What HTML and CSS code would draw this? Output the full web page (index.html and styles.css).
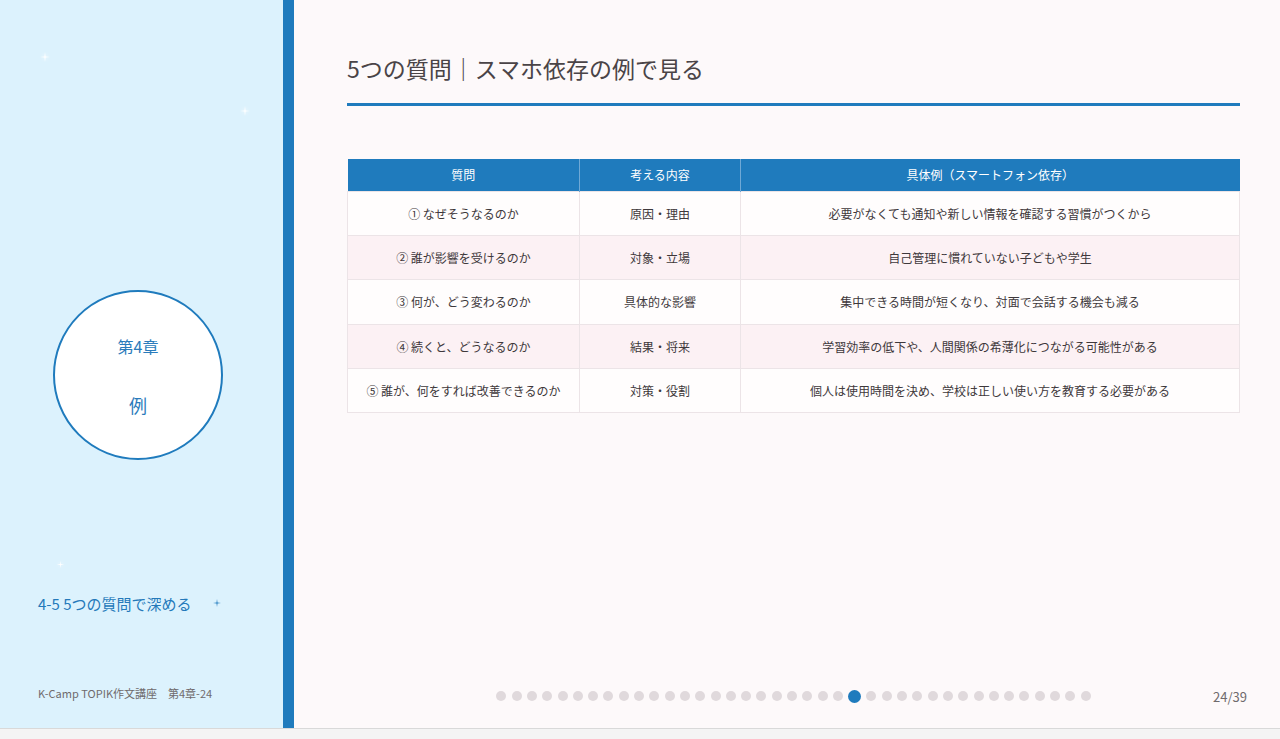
FILE: index.html
```html
<!DOCTYPE html>
<html lang="ja">
<head>
<meta charset="utf-8">
<title>5つの質問｜スマホ依存の例で見る</title>
<link rel="stylesheet" href="styles.css">
</head>
<body>
<div class="slide">
  <aside class="sidebar">
    <svg class="sparkle s1" viewBox="0 0 20 20"><path d="M10 2 L11 9 L18 10 L11 11 L10 18 L9 11 L2 10 L9 9 Z"/></svg>
    <svg class="sparkle s2" viewBox="0 0 20 20"><path d="M10 2 L11 9 L18 10 L11 11 L10 18 L9 11 L2 10 L9 9 Z"/></svg>
    <svg class="sparkle s3" viewBox="0 0 20 20"><path d="M10 2 L11 9 L18 10 L11 11 L10 18 L9 11 L2 10 L9 9 Z"/></svg>
    <svg class="sparkle s4" viewBox="0 0 20 20"><path d="M10 2 L11 9 L18 10 L11 11 L10 18 L9 11 L2 10 L9 9 Z"/></svg>
    <div class="chapter">
      <div class="chapter-num">第4章</div>
      <div class="chapter-name">例</div>
    </div>
    <div class="section">4-5 5つの質問で深める</div>
    <div class="credit">K-Camp TOPIK作文講座　第4章-24</div>
  </aside>
  <div class="divider"></div>
  <main class="main">
    <h1 class="title">5つの質問｜スマホ依存の例で見る</h1>
    <table class="qtable">
      <colgroup><col class="c1"><col class="c2"><col class="c3"></colgroup>
      <thead>
        <tr><th>質問</th><th>考える内容</th><th>具体例（スマートフォン依存）</th></tr>
      </thead>
      <tbody>
        <tr><td>① なぜそうなるのか</td><td>原因・理由</td><td>必要がなくても通知や新しい情報を確認する習慣がつくから</td></tr>
        <tr><td>② 誰が影響を受けるのか</td><td>対象・立場</td><td>自己管理に慣れていない子どもや学生</td></tr>
        <tr><td>③ 何が、どう変わるのか</td><td>具体的な影響</td><td>集中できる時間が短くなり、対面で会話する機会も減る</td></tr>
        <tr><td>④ 続くと、どうなるのか</td><td>結果・将来</td><td>学習効率の低下や、人間関係の希薄化につながる可能性がある</td></tr>
        <tr><td>⑤ 誰が、何をすれば改善できるのか</td><td>対策・役割</td><td>個人は使用時間を決め、学校は正しい使い方を教育する必要がある</td></tr>
      </tbody>
    </table>
    <footer class="footer">
      <div></div>
      <div class="dots">
        <span class="dot"></span><span class="dot"></span><span class="dot"></span><span class="dot"></span><span class="dot"></span><span class="dot"></span><span class="dot"></span><span class="dot"></span><span class="dot"></span><span class="dot"></span><span class="dot"></span><span class="dot"></span><span class="dot"></span><span class="dot"></span><span class="dot"></span><span class="dot"></span><span class="dot"></span><span class="dot"></span><span class="dot"></span><span class="dot"></span><span class="dot"></span><span class="dot"></span><span class="dot"></span><span class="dot active"></span><span class="dot"></span><span class="dot"></span><span class="dot"></span><span class="dot"></span><span class="dot"></span><span class="dot"></span><span class="dot"></span><span class="dot"></span><span class="dot"></span><span class="dot"></span><span class="dot"></span><span class="dot"></span><span class="dot"></span><span class="dot"></span><span class="dot"></span>
      </div>
      <div class="pagenum">24/39</div>
    </footer>
  </main>
</div>
</body>
</html>
```

FILE: styles.css
```css
* { box-sizing: border-box; }
html, body { margin: 0; padding: 0; }
body {
  background: #f4f4f4;
  font-family: "Noto Sans CJK JP", "Noto Sans", sans-serif;
  color: #4a4447;
  height: 739px;
  overflow: hidden;
}
.slide {
  display: flex;
  height: 729px;
  border-bottom: 1px solid #d9d9d9;
}
.sidebar {
  position: relative;
  width: 283px;
  flex: none;
  background: #dcf2fd;
  display: flex;
  flex-direction: column;
  padding: 290px 0 0 38px;
}
.divider {
  width: 11px;
  flex: none;
  background: #1f7bbd;
}
.sparkle {
  position: absolute;
  width: 12px;
  height: 12px;
  fill: #ffffff;
  filter: drop-shadow(0 0 2px rgba(255,255,255,0.9));
}
.s1 { left: 39px; top: 51px; }
.s2 { left: 239px; top: 105px; }
.s3 { left: 56px; top: 560px; width: 9px; height: 9px; }
.s4 { left: 212px; top: 598px; width: 10px; height: 10px; fill: #2a80c0; filter: none; }
.chapter {
  width: 170px;
  height: 170px;
  margin-left: 15px;
  border-radius: 50%;
  border: 2px solid #1f7bbd;
  background: #ffffff;
  display: flex;
  flex-direction: column;
  align-items: center;
  color: #2a7bbb;
}
.chapter-num {
  font-size: 16px;
  line-height: 24px;
  margin-top: 42px;
}
.chapter-name {
  font-size: 18px;
  line-height: 26px;
  margin-top: 34px;
}
.section {
  margin-top: 133px;
  font-size: 15px;
  line-height: 22px;
  color: #2479ba;
}
.credit {
  margin-top: 69px;
  font-size: 11px;
  line-height: 18px;
  color: #6f6a6c;
}
.main {
  flex: 1;
  background: #fdf9fa;
  padding: 52px 40px 0 53px;
  display: flex;
  flex-direction: column;
}
.title {
  margin: 0;
  font-size: 23px;
  font-weight: 400;
  line-height: 32px;
  color: #4a4447;
  padding-bottom: 19px;
  border-bottom: 3px solid #1f7bbd;
}
.qtable {
  margin-top: 53px;
  width: 100%;
  border-collapse: collapse;
  table-layout: fixed;
  font-size: 12px;
}
.c1 { width: 232px; }
.c2 { width: 161px; }
.qtable th {
  background: #1f7bbd;
  color: #ffffff;
  font-weight: 400;
  height: 32px;
  padding: 0;
  border-left: 1px solid #6fa9d6;
  text-align: center;
}
.qtable th:first-child { border-left: none; }
.qtable td {
  height: 44.4px;
  padding: 0;
  text-align: center;
  border: 1px solid #ece4e7;
  color: #3e383b;
  font-weight: 400;
}
.qtable tbody tr:nth-child(odd) td { background: #fffdfd; }
.qtable tbody tr:nth-child(even) td { background: #fcf1f4; }
.footer {
  margin: auto -7px 0 -7px;
  height: 44px;
  display: grid;
  grid-template-columns: 1fr auto 1fr;
  align-items: center;
  padding-bottom: 20px;
}
.dots {
  display: flex;
  align-items: center;
  gap: 5.3px;
}
.dot {
  width: 10px;
  height: 10px;
  border-radius: 50%;
  background: #e0d9dc;
}
.dot.active {
  width: 13px;
  height: 13px;
  background: #1f7bbd;
}
.pagenum {
  justify-self: end;
  font-size: 13px;
  color: #6f6a6c;
}
```
